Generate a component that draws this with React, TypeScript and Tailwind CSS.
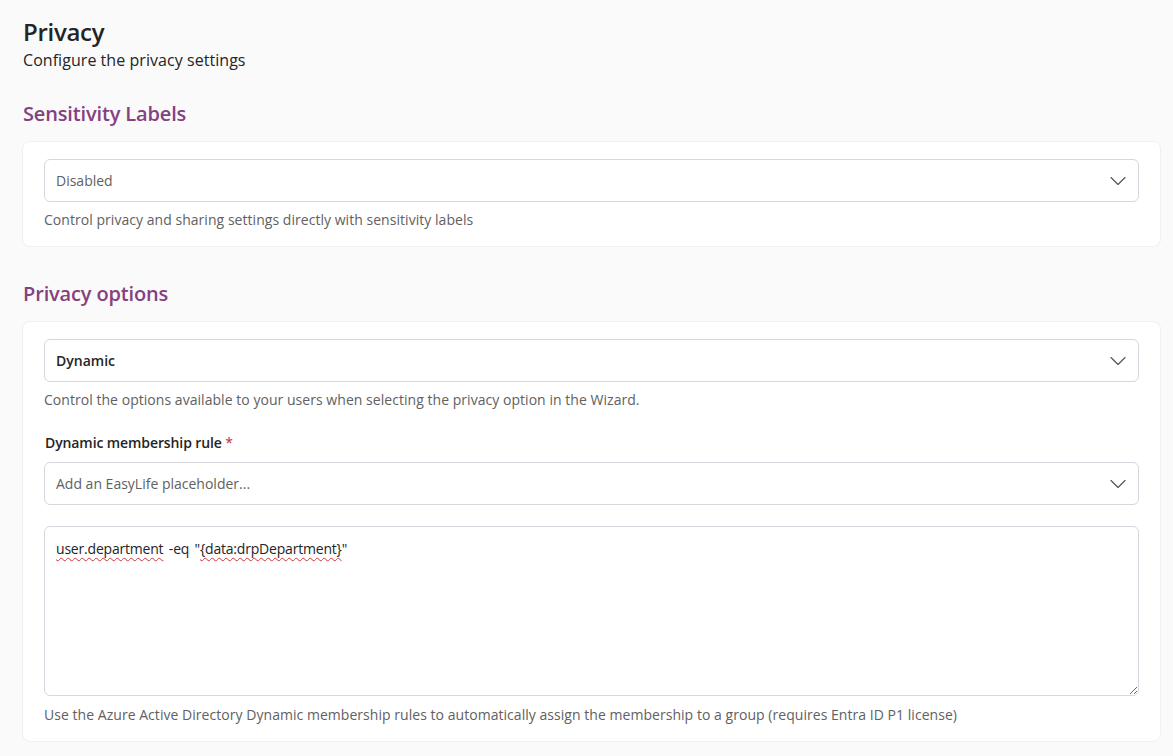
import { ChevronDown } from "lucide-react";

const font = { fontFamily: '"Open Sans", "Noto Sans", sans-serif' };

const Select = ({ value, bold }: { value: string; bold?: boolean }) => (
  <div className="flex h-[43px] items-center justify-between rounded-[6px] border border-[#d6d6de] bg-white pl-[11px] pr-[6px]">
    <span className={bold ? "text-[14px] font-semibold text-[#242424]" : "text-[14px] text-[#616161]"}>
      {value}
    </span>
    <ChevronDown size={28} strokeWidth={1} className="text-[#555555]" />
  </div>
);

const Hint = ({ children }: { children: string }) => (
  <p className="mt-[8px] text-[14px] leading-[20px] tracking-[0.04px] text-[#616161]">{children}</p>
);

const squiggle = "[text-decoration:underline_wavy_#d13438_1.25px] [text-underline-offset:3px]";

export default function App() {
  return (
    <div style={font} className="h-[756px] overflow-hidden bg-[#fafafa] pl-[22px] pr-[12px] pt-[16px]">
      <h1 className="pl-px text-[24px] font-semibold leading-[32px] tracking-[-0.3px] text-[#242424]">Privacy</h1>
      <p className="pl-px pt-px text-[16px] leading-[22px] tracking-[0.05px] text-[#242424]">Configure the privacy settings</p>

      <h2 className="mt-[29px] pl-px text-[20px] font-semibold leading-[28px] tracking-[-0.15px] text-[#854080]">Sensitivity Labels</h2>
      <section className="mt-[13px] rounded-[8px] border border-[#f0f0f0] bg-white px-[21px] pb-[16px] pt-[17px]">
        <Select value="Disabled" />
        <Hint>Control privacy and sharing settings directly with sensitivity labels</Hint>
      </section>

      <h2 className="mt-[33px] pl-px text-[20px] font-semibold leading-[28px] tracking-[-0.15px] text-[#854080]">Privacy options</h2>
      <section className="mt-[13px] rounded-[8px] border border-[#f0f0f0] bg-white px-[21px] pb-[16px] pt-[17px]">
        <Select value="Dynamic" bold />
        <Hint>Control the options available to your users when selecting the privacy option in the Wizard.</Hint>

        <label className="mt-[23px] block pl-px text-[14px] font-semibold leading-[20px] tracking-[-0.1px] text-[#242424]">
          Dynamic membership rule <span className="font-normal text-[#bc2f32]">*</span>
        </label>
        <div className="mt-[9px]">
          <Select value="Add an EasyLife placeholder..." />
        </div>

        <div className="mt-[21px] h-[170px] resize overflow-auto rounded-[6px] border border-[#d6d6de] bg-white px-[11px] pb-[12px] pt-[12px] text-[14px] leading-[20px] tracking-[-0.2px] [word-spacing:2px] text-[#242424]">
          <span className={squiggle}>user.department</span> -eq &quot;
          <span className={squiggle}>{"{data:drpDepartment}"}</span>&quot;
        </div>
        <div className="pt-px">
          <Hint>Use the Azure Active Directory Dynamic membership rules to automatically assign the membership to a group (requires Entra ID P1 license)</Hint>
        </div>
      </section>
    </div>
  );
}
